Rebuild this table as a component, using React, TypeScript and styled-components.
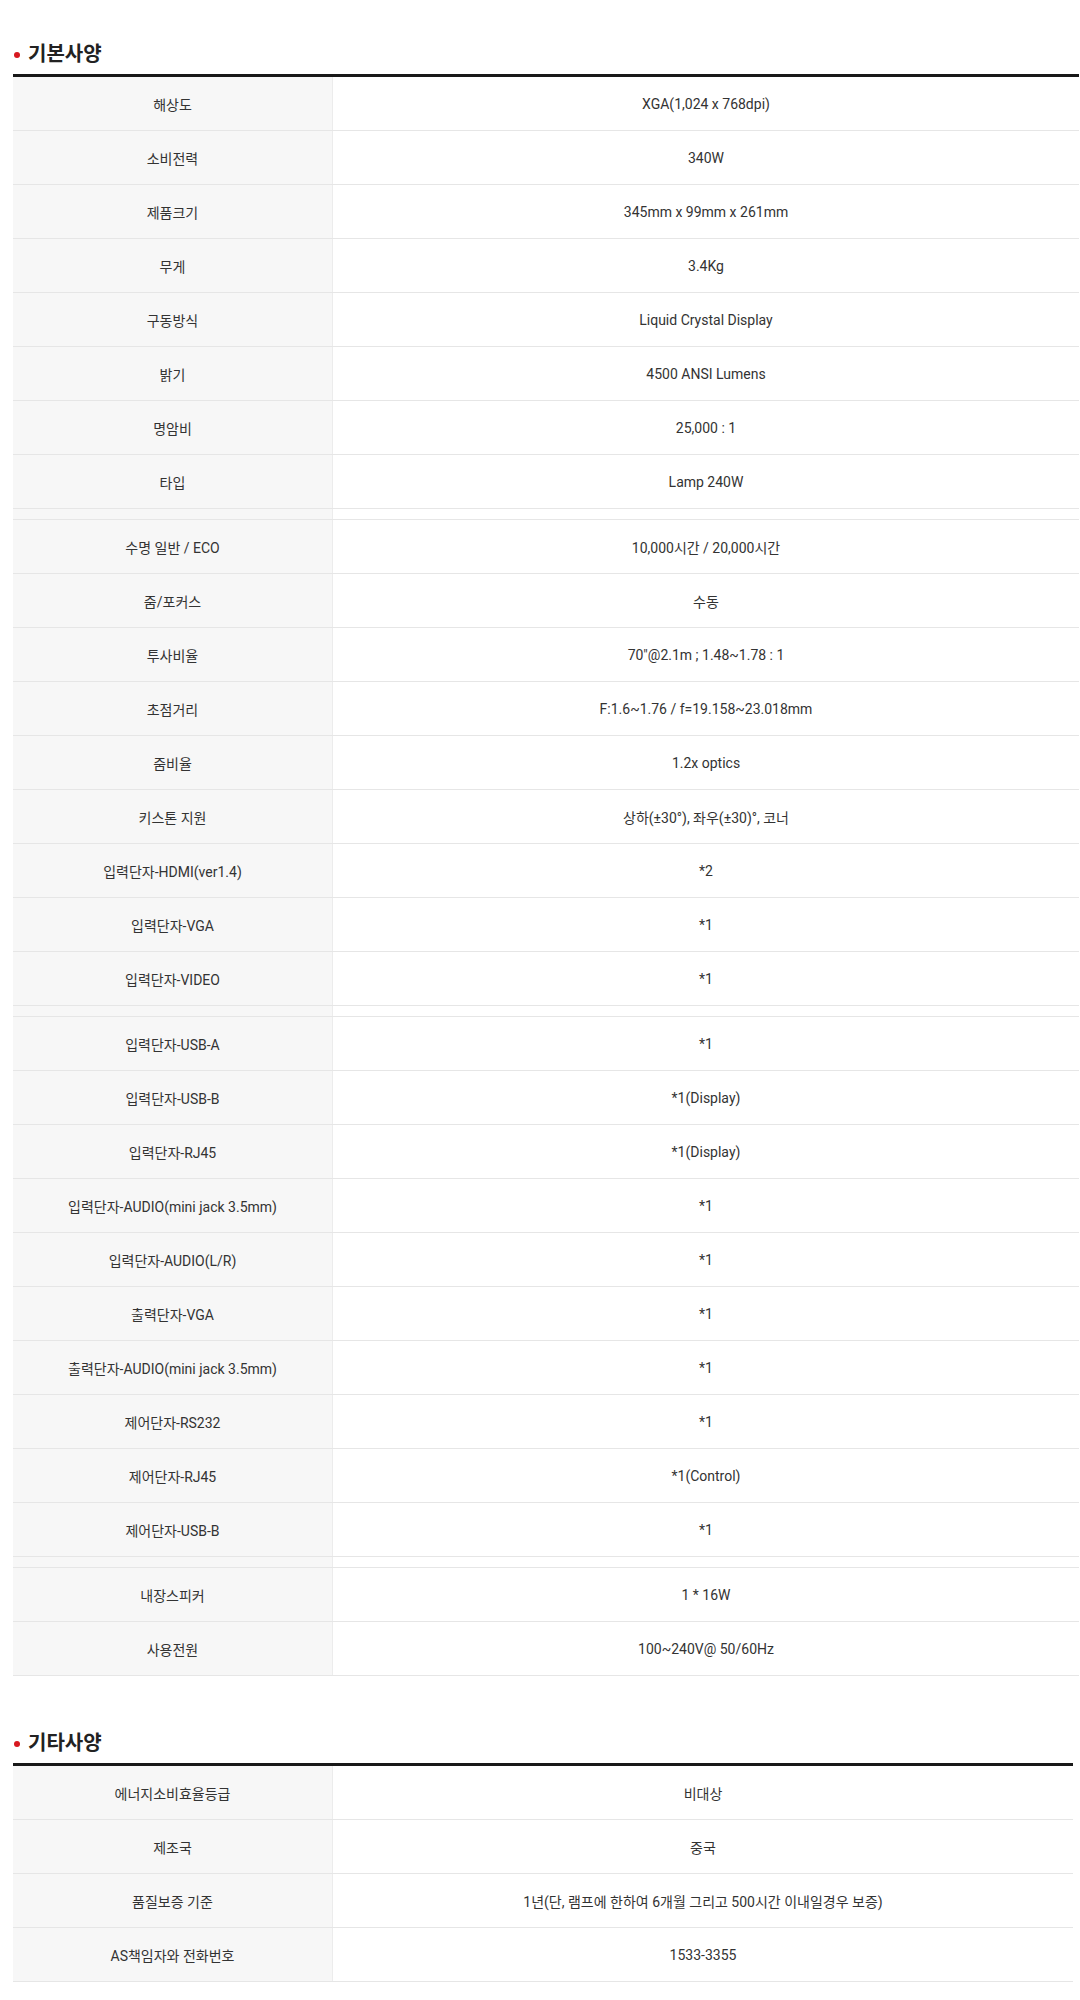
import React from "react";
import styled, { createGlobalStyle } from "styled-components";

type Spec = [string, string];

const basicGroups: Spec[][] = [
  [
    ["해상도", "XGA(1,024 x 768dpi)"],
    ["소비전력", "340W"],
    ["제품크기", "345mm x 99mm x 261mm"],
    ["무게", "3.4Kg"],
    ["구동방식", "Liquid Crystal Display"],
    ["밝기", "4500 ANSI Lumens"],
    ["명암비", "25,000 : 1"],
    ["타입", "Lamp 240W"],
  ],
  [
    ["수명 일반 / ECO", "10,000시간 / 20,000시간"],
    ["줌/포커스", "수동"],
    ["투사비율", "70\"@2.1m ; 1.48~1.78 : 1"],
    ["초점거리", "F:1.6~1.76 / f=19.158~23.018mm"],
    ["줌비율", "1.2x optics"],
    ["키스톤 지원", "상하(±30°), 좌우(±30)°, 코너"],
    ["입력단자-HDMI(ver1.4)", "*2"],
    ["입력단자-VGA", "*1"],
    ["입력단자-VIDEO", "*1"],
  ],
  [
    ["입력단자-USB-A", "*1"],
    ["입력단자-USB-B", "*1(Display)"],
    ["입력단자-RJ45", "*1(Display)"],
    ["입력단자-AUDIO(mini jack 3.5mm)", "*1"],
    ["입력단자-AUDIO(L/R)", "*1"],
    ["출력단자-VGA", "*1"],
    ["출력단자-AUDIO(mini jack 3.5mm)", "*1"],
    ["제어단자-RS232", "*1"],
    ["제어단자-RJ45", "*1(Control)"],
    ["제어단자-USB-B", "*1"],
  ],
  [
    ["내장스피커", "1 * 16W"],
    ["사용전원", "100~240V@ 50/60Hz"],
  ],
];

const etcGroups: Spec[][] = [
  [
    ["에너지소비효율등급", "비대상"],
    ["제조국", "중국"],
    ["품질보증 기준", "1년(단, 램프에 한하여 6개월 그리고 500시간 이내일경우 보증)"],
    ["AS책임자와 전화번호", "1533-3355"],
  ],
];

const SpecSection = ({
  title,
  groups,
  width,
  top,
}: {
  title: string;
  groups: Spec[][];
  width: number;
  top: number;
}) => {
  return (
    <Section $top={top}>
      <Title>{title}</Title>
      <Table $width={width}>
        {groups.map((group, gi) => (
          <React.Fragment key={gi}>
            {gi > 0 && (
              <Row $strip>
                <Label />
                <Value />
              </Row>
            )}
            {group.map(([label, value]) => (
              <Row key={label}>
                <Label>{label}</Label>
                <Value>{value}</Value>
              </Row>
            ))}
          </React.Fragment>
        ))}
      </Table>
    </Section>
  );
};

const App = () => {
  return (
    <Page>
      <GlobalStyle />
      <SpecSection title="기본사양" groups={basicGroups} width={1066} top={40} />
      <SpecSection title="기타사양" groups={etcGroups} width={1060} top={53} />
    </Page>
  );
};

export default App;

const GlobalStyle = createGlobalStyle`
  html, body {
    margin: 0;
    padding: 0;
    background: #ffffff;
  }
  body {
    font-family: Roboto, "Noto Sans CJK KR", "Noto Sans", sans-serif;
    color: #333333;
  }
`;

const Page = styled.div`
  width: 1080px;
  display: flex;
  flex-direction: column;
`;

const Section = styled.section<{ $top: number }>`
  padding: ${(p) => p.$top}px 0 0 13px;
  display: flex;
  flex-direction: column;
`;

const Title = styled.h2`
  margin: 0 0 6px;
  height: 28px;
  display: flex;
  align-items: center;
  font-size: 20px;
  font-weight: 700;
  line-height: 28px;
  color: #222222;

  &::before {
    content: "";
    width: 6px;
    height: 6px;
    margin: 2px 8px 0 1px;
    border-radius: 50%;
    background: #d7191f;
  }
`;

const Table = styled.div<{ $width: number }>`
  width: ${(p) => p.$width}px;
  border-top: 3px solid #181818;
  display: flex;
  flex-direction: column;
`;

const Row = styled.div<{ $strip?: boolean }>`
  display: grid;
  grid-template-columns: 320px 1fr;
  height: ${(p) => (p.$strip ? 10 : 53)}px;
  border-bottom: 1px solid #e6e6e6;
`;

const Label = styled.div`
  display: flex;
  align-items: center;
  justify-content: center;
  background: #f7f7f7;
  border-right: 1px solid #ececec;
  font-size: 14px;
  color: #333333;
`;

const Value = styled.div`
  display: flex;
  align-items: center;
  justify-content: center;
  background: #ffffff;
  font-size: 14px;
  color: #333333;
`;
